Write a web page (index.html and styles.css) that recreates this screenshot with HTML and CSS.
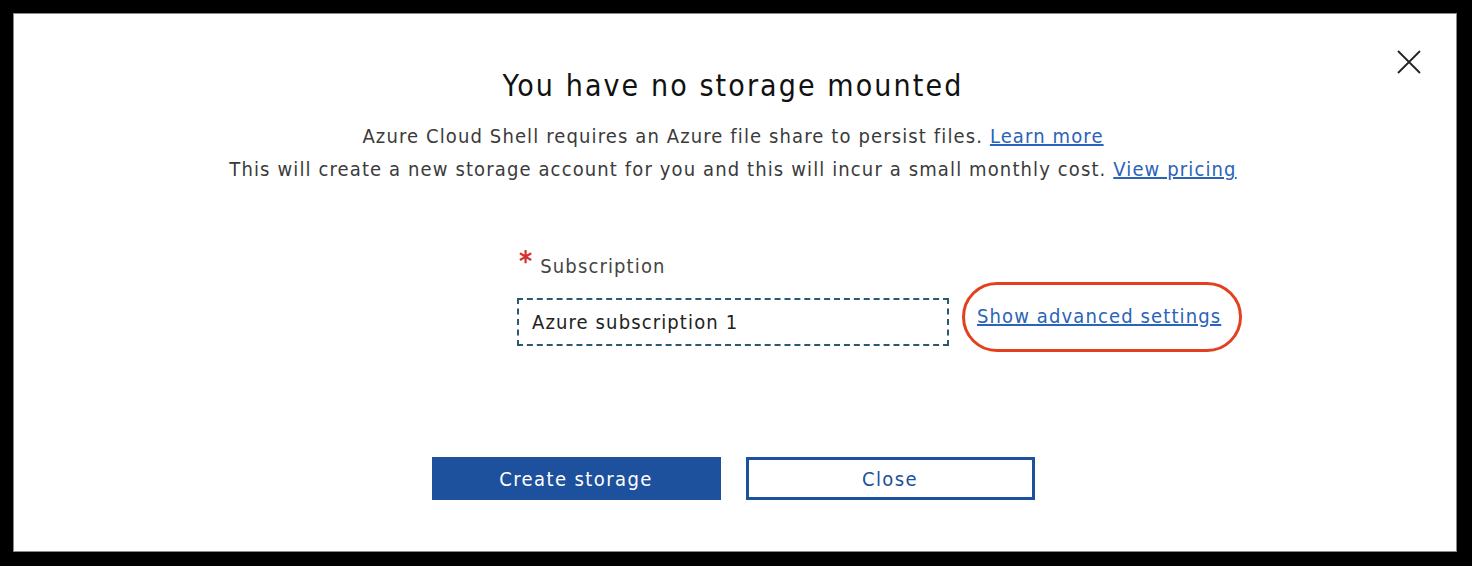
FILE: index.html
```html
<!DOCTYPE html>
<html lang="en">
<head>
  <meta charset="UTF-8">
  <title>Cloud Shell storage</title>
  <link rel="stylesheet" href="styles.css">
</head>
<body>

  <div class="dialog">
    <button class="tutup" aria-label="Close">
      <svg width="26" height="26" viewBox="0 0 26 26">
        <path d="M2 2 L24 24 M24 2 L2 24" stroke="#222" stroke-width="1.8" fill="none"/>
      </svg>
    </button>

    <h1>You have no storage mounted</h1>
    <p class="info">
      Azure Cloud Shell requires an Azure file share to persist files. <a href="#">Learn more</a><br>
      This will create a new storage account for you and this will incur a small monthly cost. <a href="#">View pricing</a>
    </p>

    <div class="form-grid">
      <label class="label" for="sub"><span class="wajib">*</span>Subscription</label>
      <div class="input-box" id="sub">Azure subscription 1</div>
      <div class="oval"><a href="#">Show advanced settings</a></div>
    </div>

    <div class="tombol">
      <button class="btn btn-utama">Create storage</button>
      <button class="btn btn-garis">Close</button>
    </div>
  </div>

</body>
</html>
```

FILE: styles.css
```css
html, body {
  margin: 0;
  height: 566px;
  background-color: #000;
  overflow: hidden;
}

body {
  padding: 13px 15px 14px 13px;
  box-sizing: border-box;
  font-family: "DejaVu Sans Condensed", "DejaVu Sans", sans-serif;
  font-stretch: condensed;
  letter-spacing: 0.07em;
}

.dialog {
  position: relative;
  height: 539px;
  box-sizing: border-box;
  background: #fff;
  border: 1px solid #8a8a8a;
  padding: 52px 4px 0 0;
  text-align: center;
}

.tutup {
  position: absolute;
  top: 35px;
  right: 34px;
  background: none;
  border: none;
  padding: 0;
  cursor: pointer;
}

h1 {
  margin: 0;
  font-size: 30px;
  font-weight: normal;
  line-height: 40px;
  letter-spacing: 0.07em;
  color: #111;
}

.info {
  margin: 14px 0 0;
  font-size: 20px;
  line-height: 33px;
  color: #3b3b3b;
}

.info a, .oval a {
  color: #2a63b8;
  text-decoration: underline;
}

.form-grid {
  display: grid;
  grid-template-columns: 1fr 432px 1fr;
  grid-template-rows: auto auto;
  column-gap: 13px;
  row-gap: 19px;
  margin-top: 66px;
  text-align: left;
}

.label {
  grid-column: 2;
  font-size: 20px;
  line-height: 26px;
  color: #444;
  margin-left: 2px;
}

.wajib {
  display: inline-block;
  color: #d9302c;
  font-size: 28px;
  font-weight: bold;
  line-height: 20px;
  vertical-align: 2px;
  margin-right: 7px;
}

.input-box {
  grid-column: 2;
  grid-row: 2;
  height: 48px;
  box-sizing: border-box;
  border: 2px dashed #2d5872;
  padding: 0 13px;
  font-size: 20px;
  line-height: 44px;
  color: #222;
}

.oval {
  grid-column: 3;
  grid-row: 2;
  justify-self: start;
  align-self: start;
  margin: -16px 0 -6px;
  border: 3px solid #e2401f;
  border-radius: 36px;
  padding: 18px 18px 20px 12px;
  font-size: 20px;
  line-height: 26px;
}

.tombol {
  display: flex;
  justify-content: center;
  gap: 25px;
  margin-top: 111px;
}

.btn {
  width: 289px;
  height: 43px;
  font-family: inherit;
  font-stretch: condensed;
  letter-spacing: 0.07em;
  font-size: 20px;
  cursor: pointer;
}

.btn-utama {
  background-color: #1d509d;
  color: #fff;
  border: none;
}

.btn-garis {
  background-color: #fff;
  color: #1d509d;
  border: 3px solid #1d509d;
}
```
